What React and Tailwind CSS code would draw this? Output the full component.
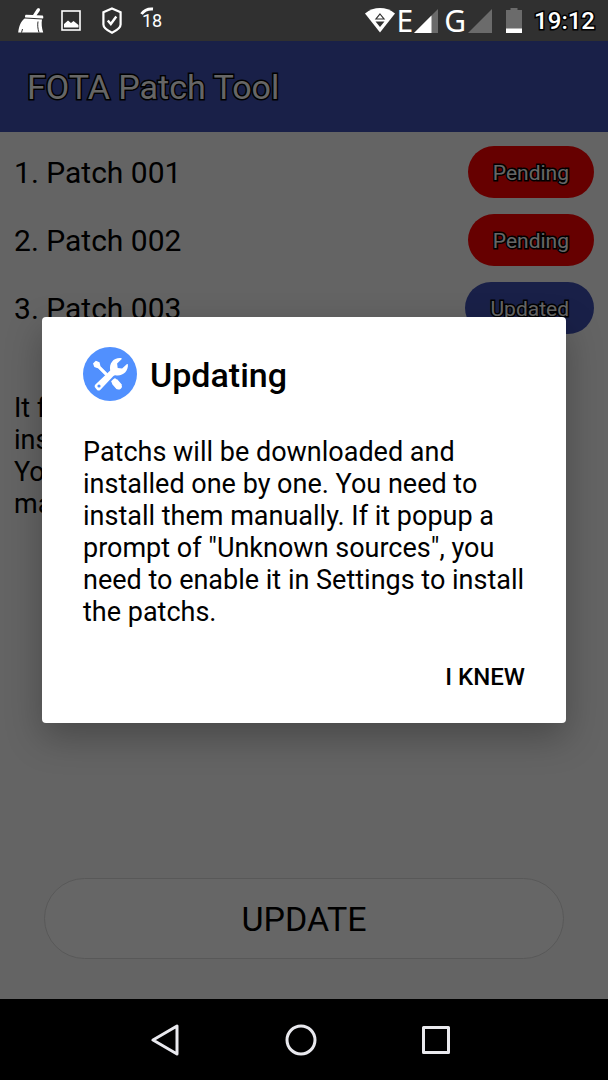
import { useState } from "react";

const patches = [
  { id: 1, name: "Patch 001", status: "Pending" },
  { id: 2, name: "Patch 002", status: "Pending" },
  { id: 3, name: "Patch 003", status: "Updated" },
];

const outline = "[-webkit-text-stroke:3px_#000] [paint-order:stroke_fill]";

const BroomIcon = () => (
  <svg width="26" height="26" viewBox="0 0 26 26" fill="#fff" aria-hidden="true">
    <path d="M18.500 1.500 20 0l2 .8-.2 2-3.200 4.400 6 .4c.8.2.9 2.600.4 3L7.300 9.600C6.700 9 7 7.200 7.800 6.800l7.200.2z" />
    <path d="M6.600 10.600 24 11.600c-.7 4-.3 8 1.200 13H.2C1 18.500 2.400 14 6.600 10.600z" />
    <path d="M20 13.500c-.6 3.500-.3 7 1 11M4.500 21l-1 3.600" stroke="#303030" strokeWidth="1" fill="none" />
  </svg>
);

const PictureIcon = () => (
  <svg width="21" height="21" viewBox="0 0 21 21" aria-hidden="true">
    <rect x="1" y="1" width="18" height="19" fill="none" stroke="#fff" strokeWidth="1.600" />
    <path d="M3 17.500v-3.500l4-3.500 3 2.500 2.500-2 5 4v2.500z" fill="#fff" />
  </svg>
);

const ShieldIcon = () => (
  <svg width="20" height="27" viewBox="0 0 20 27" fill="none" stroke="#fff" strokeWidth="2.200" aria-hidden="true">
    <path d="M10 1.500 18.600 5.200v12.300c0 3-5 6.500-8.600 8.200-3.600-1.700-8.600-5.200-8.600-8.200V5.200z" />
    <path d="m5.800 13.500 3 3.500 5.500-7.500" strokeWidth="2.400" />
  </svg>
);

const WifiIcon = () => (
  <svg width="30" height="25" viewBox="0 0 30 25" aria-hidden="true">
    <path d="M0 5.500C9-1.700 21-1.700 30 5.500L15 24.500z" fill="#fff" />
    <path d="m15 6 4 5h-8z" fill="none" stroke="#303030" strokeWidth="1.200" />
    <path d="M10.500 13.500h9L15 19z" fill="#303030" />
  </svg>
);

const SignalIcon = ({ level }) => (
  <svg width="24" height="24" viewBox="0 0 24 24" aria-hidden="true">
    <path d="M24 0v24H0z" fill="#6b6b6b" />
    {level > 0 && <path d="M17.500 6.500V24H0z" fill="#fff" />}
  </svg>
);

const BatteryIcon = () => (
  <svg width="16" height="25" viewBox="0 0 16 25" aria-hidden="true">
    <path d="M4.500 0h7v2H16v23H0V2h4.500z" fill="#6b6b6b" />
    <path d="M0 20.500h16V25H0z" fill="#fff" />
  </svg>
);

const ToolsIcon = () => (
  <svg width="54" height="54" viewBox="0 0 54 54" className="shrink-0" aria-hidden="true">
    <circle cx="27" cy="27" r="27" fill="#5190fe" />
    {/* screwdriver */}
    <path d="M14 18 31 35" stroke="#fff" strokeWidth="2.800" />
    <path d="m10 16.500 2.800-2.800 3.700 1.600.9 3.400-2.700 2.500-3.400-1.300z" fill="#fff" />
    <path d="m31.500 34.500 4.800 5.500" stroke="#fff" strokeWidth="7" />
    <path d="m31.500 34.500 4.300 4.900" stroke="#fff" strokeWidth="6" strokeLinecap="round" />
    {/* wrench, cut out of the screwdriver with a thin gap */}
    <path d="M15.500 40 33 23.500" stroke="#5190fe" strokeWidth="9" />
    <path d="M14 18 25 29" stroke="#fff" strokeWidth="2.800" />
    <path d="M12.400 37.400 27.200 23.600c-1.200-7 2.800-12.500 9.800-12.500h1.300l.5.8-4.700 4.700.6 4.300 4.400.7 4.900-4.700.9.400c.6 6.800-5 12.300-12.400 11-1 0-1.700.3-2.300.9L17.200 43c-1 .9-2.300.7-3.100-.1l-1.800-2.200c-.9-1.100-.8-2.400.1-3.300z" fill="#fff" />
    <circle cx="16" cy="39" r="1.600" fill="#5190fe" />
  </svg>
);

const StatusBar = () => (
  <div className="flex h-[41px] items-center justify-between bg-[#303030] pl-[18px] pr-[13px] text-white">
    <div className="flex items-center">
      <BroomIcon />
      <div className="ml-[17px]">
        <PictureIcon />
      </div>
      <div className="ml-5">
        <ShieldIcon />
      </div>
      <div className="relative ml-5 text-lg leading-5">
        18
        <svg className="absolute -left-0.5 -top-1" width="14" height="9" viewBox="0 0 14 9" aria-hidden="true">
          <path d="M1.500 7C4 3.500 8 1.500 13 2" fill="none" stroke="#fff" strokeWidth="3" />
        </svg>
      </div>
    </div>
    <div className="flex items-center">
      <WifiIcon />
      <span className="ml-0.5 font-['Noto_Sans',sans-serif] text-[30px] leading-10">E</span>
      <div className="ml-px">
        <SignalIcon level={1} />
      </div>
      <span className="ml-1.5 mr-0.5 font-['Noto_Sans',sans-serif] text-[30px] leading-10">G</span>
      <SignalIcon level={0} />
      <div className="ml-3.5 mr-3">
        <BatteryIcon />
      </div>
      <span className={`text-2xl font-medium ${outline}`}>19:12</span>
    </div>
  </div>
);

const NavBar = () => (
  <nav className="flex h-[81px] items-center justify-center gap-[105px] bg-black pr-2">
    <button type="button" aria-label="Back">
      <svg width="30" height="32" viewBox="0 0 30 32" fill="none" stroke="#e9e9ee" strokeWidth="3" strokeLinejoin="round">
        <path d="M3 16 27 2v28z" />
      </svg>
    </button>
    <button type="button" aria-label="Home">
      <svg width="32" height="32" viewBox="0 0 32 32" fill="none" stroke="#e9e9ee" strokeWidth="3">
        <circle cx="16" cy="16" r="14" />
      </svg>
    </button>
    <button type="button" aria-label="Recent apps">
      <svg width="28" height="28" viewBox="0 0 28 28" fill="none" stroke="#e9e9ee" strokeWidth="3" strokeLinejoin="round">
        <path d="M1.500 1.500h25v25h-25z" />
      </svg>
    </button>
  </nav>
);

const UpdatingDialog = ({ onClose }) => (
  <div className="absolute inset-0 flex items-center justify-center bg-black/60 px-[42px]">
    <div
      role="dialog"
      aria-labelledby="dialog-title"
      className="w-full max-w-xl rounded bg-white px-[41px] pb-[26px] pt-[30px] shadow-[0_14px_36px_rgba(0,0,0,0.28)]"
    >
      <div className="flex items-center gap-[13px]">
        <ToolsIcon />
        <h2 id="dialog-title" className="pt-0.5 text-[34px] font-medium leading-[52px]">
          Updating
        </h2>
      </div>
      <p className="mt-[35px] text-[27px] leading-8">
        Patchs will be downloaded and installed one by one. You need to install them manually. If it popup a prompt of
        "Unknown sources", you need to enable it in Settings to install the patchs.
      </p>
      <div className="mt-[29px] flex justify-end">
        <button type="button" onClick={onClose} className="h-10 text-2xl font-medium">
          I KNEW
        </button>
      </div>
    </div>
  </div>
);

const App = () => {
  const [open, setOpen] = useState(true);

  return (
    <div className="flex min-h-screen flex-col font-[Roboto,sans-serif] text-black">
      <StatusBar />
      <div className="relative flex flex-1 flex-col bg-[#fafafa]">
        <header className="flex h-[91px] items-center bg-[#3f51b5] px-[27px] pt-0.5">
          <h1 className={`text-[34px] text-white ${outline}`}>FOTA Patch Tool</h1>
        </header>

        <main className="flex flex-1 flex-col pb-10 pt-3.5">
          <ul className="flex flex-col gap-4 px-3.5">
            {patches.map((patch) => (
              <li key={patch.id} className="flex items-center justify-between">
                <span className="text-[30px]">
                  {patch.id}. {patch.name}
                </span>
                <span
                  className={`flex h-[52px] items-center rounded-full px-[25px] pt-1 text-[21px] text-white ${outline} ${
                    patch.status === "Pending" ? "bg-[#ff0000]" : "bg-[#3f51b5]"
                  }`}
                >
                  {patch.status}
                </span>
              </li>
            ))}
          </ul>

          <p className="mt-[58px] px-3.5 text-[27px] leading-8">
            It found patchs to be
            <br />
            installed on the device.
            <br />
            You need to install them
            <br />
            manually one by one.
          </p>

          <button
            type="button"
            onClick={() => setOpen(true)}
            className="mx-11 mt-auto h-[81px] rounded-full border border-[#dcdcdc] bg-white pt-0.5 text-[34px]"
          >
            UPDATE
          </button>
        </main>

        {open && <UpdatingDialog onClose={() => setOpen(false)} />}
      </div>
      <NavBar />
    </div>
  );
};

export default App;
